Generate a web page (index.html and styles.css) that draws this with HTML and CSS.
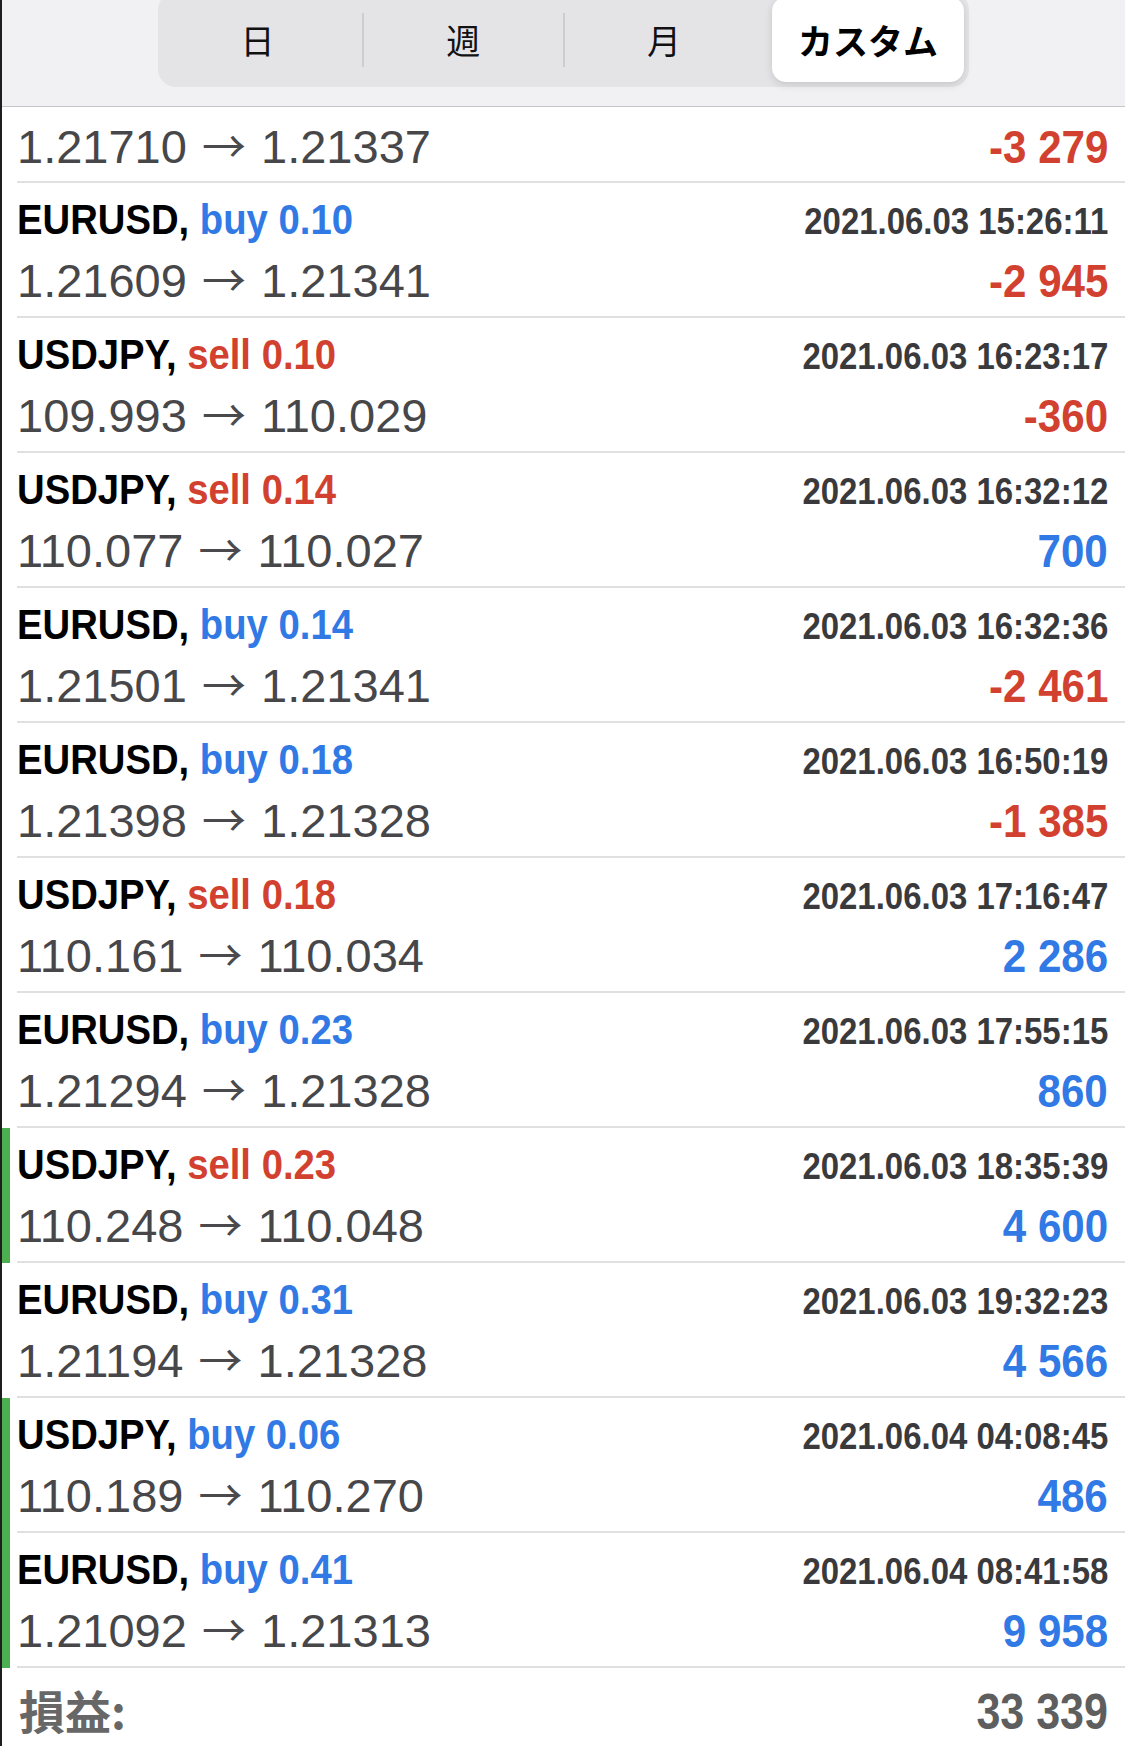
FILE: index.html
```html
<!DOCTYPE html>
<html lang="ja">
<head>
<meta charset="utf-8">
<title>履歴</title>
<link rel="stylesheet" href="styles.css">
</head>
<body>
<div class="screen">
  <header class="header">
    <nav class="segmented">
      <div class="seg divider first">日</div>
      <div class="seg divider">週</div>
      <div class="seg">月</div>
      <div class="seg active">カスタム</div>
    </nav>
  </header>
  <main class="list">
    <div class="row">
      <div class="row-body tail">
        <div class="line line-bottom first">
          <span class="price">1.21710 <span class="arrow">→</span> 1.21337</span>
          <span class="pnl loss">-3 279</span>
        </div>
      </div>
    </div>

    <div class="row">
      <div class="row-body">
        <div class="line line-top">
          <span class="sym">EURUSD, <span class="buy">buy 0.10</span></span>
          <span class="date">2021.06.03 15:26:11</span>
        </div>
        <div class="line line-bottom">
          <span class="price">1.21609 <span class="arrow">→</span> 1.21341</span>
          <span class="pnl loss">-2 945</span>
        </div>
      </div>
    </div>

    <div class="row">
      <div class="row-body">
        <div class="line line-top">
          <span class="sym">USDJPY, <span class="sell">sell 0.10</span></span>
          <span class="date">2021.06.03 16:23:17</span>
        </div>
        <div class="line line-bottom">
          <span class="price">109.993 <span class="arrow">→</span> 110.029</span>
          <span class="pnl loss">-360</span>
        </div>
      </div>
    </div>

    <div class="row">
      <div class="row-body">
        <div class="line line-top">
          <span class="sym">USDJPY, <span class="sell">sell 0.14</span></span>
          <span class="date">2021.06.03 16:32:12</span>
        </div>
        <div class="line line-bottom">
          <span class="price">110.077 <span class="arrow">→</span> 110.027</span>
          <span class="pnl gain">700</span>
        </div>
      </div>
    </div>

    <div class="row">
      <div class="row-body">
        <div class="line line-top">
          <span class="sym">EURUSD, <span class="buy">buy 0.14</span></span>
          <span class="date">2021.06.03 16:32:36</span>
        </div>
        <div class="line line-bottom">
          <span class="price">1.21501 <span class="arrow">→</span> 1.21341</span>
          <span class="pnl loss">-2 461</span>
        </div>
      </div>
    </div>

    <div class="row">
      <div class="row-body">
        <div class="line line-top">
          <span class="sym">EURUSD, <span class="buy">buy 0.18</span></span>
          <span class="date">2021.06.03 16:50:19</span>
        </div>
        <div class="line line-bottom">
          <span class="price">1.21398 <span class="arrow">→</span> 1.21328</span>
          <span class="pnl loss">-1 385</span>
        </div>
      </div>
    </div>

    <div class="row">
      <div class="row-body">
        <div class="line line-top">
          <span class="sym">USDJPY, <span class="sell">sell 0.18</span></span>
          <span class="date">2021.06.03 17:16:47</span>
        </div>
        <div class="line line-bottom">
          <span class="price">110.161 <span class="arrow">→</span> 110.034</span>
          <span class="pnl gain">2 286</span>
        </div>
      </div>
    </div>

    <div class="row">
      <div class="row-body">
        <div class="line line-top">
          <span class="sym">EURUSD, <span class="buy">buy 0.23</span></span>
          <span class="date">2021.06.03 17:55:15</span>
        </div>
        <div class="line line-bottom">
          <span class="price">1.21294 <span class="arrow">→</span> 1.21328</span>
          <span class="pnl gain">860</span>
        </div>
      </div>
    </div>

    <div class="row win">
      <div class="row-body">
        <div class="line line-top">
          <span class="sym">USDJPY, <span class="sell">sell 0.23</span></span>
          <span class="date">2021.06.03 18:35:39</span>
        </div>
        <div class="line line-bottom">
          <span class="price">110.248 <span class="arrow">→</span> 110.048</span>
          <span class="pnl gain">4 600</span>
        </div>
      </div>
    </div>

    <div class="row">
      <div class="row-body">
        <div class="line line-top">
          <span class="sym">EURUSD, <span class="buy">buy 0.31</span></span>
          <span class="date">2021.06.03 19:32:23</span>
        </div>
        <div class="line line-bottom">
          <span class="price">1.21194 <span class="arrow">→</span> 1.21328</span>
          <span class="pnl gain">4 566</span>
        </div>
      </div>
    </div>

    <div class="row win">
      <div class="row-body">
        <div class="line line-top">
          <span class="sym">USDJPY, <span class="buy">buy 0.06</span></span>
          <span class="date">2021.06.04 04:08:45</span>
        </div>
        <div class="line line-bottom">
          <span class="price">110.189 <span class="arrow">→</span> 110.270</span>
          <span class="pnl gain">486</span>
        </div>
      </div>
    </div>

    <div class="row win">
      <div class="row-body">
        <div class="line line-top">
          <span class="sym">EURUSD, <span class="buy">buy 0.41</span></span>
          <span class="date">2021.06.04 08:41:58</span>
        </div>
        <div class="line line-bottom">
          <span class="price">1.21092 <span class="arrow">→</span> 1.21313</span>
          <span class="pnl gain">9 958</span>
        </div>
      </div>
    </div>

    <div class="total">
      <span class="total-label">損益:</span>
      <span class="total-value">33 339</span>
    </div>
  </main>
</div>
</body>
</html>
```

FILE: styles.css
```css
html, body {
  margin: 0;
  padding: 0;
  background: #ffffff;
}

body {
  font-family: "Liberation Sans", Arial, "Noto Sans CJK JP", sans-serif;
}

.screen {
  width: 1125px;
  height: 1746px;
  box-sizing: border-box;
  border-left: 2px solid #1e1e1e;
  overflow: hidden;
  display: flex;
  flex-direction: column;
  background: #ffffff;
}

/* ---------- header / segmented control ---------- */
.header {
  flex: none;
  height: 106px;
  background: #f1f1f3;
  border-bottom: 1px solid #c6c6c8;
  overflow: hidden;
}

.segmented {
  width: 811px;
  height: 95px;
  margin: -8px auto 0;
  box-sizing: border-box;
  padding: 5px 4px;
  background: #e4e4e7;
  border-radius: 18px;
  display: grid;
  grid-template-columns: repeat(4, 1fr);
}

.seg {
  position: relative;
  display: flex;
  align-items: center;
  justify-content: center;
  font-family: "Noto Sans CJK JP", sans-serif;
  font-size: 34px;
  color: #111111;
}

.seg.first {
  padding-right: 10px;
}

.seg.divider::after {
  content: "";
  position: absolute;
  right: -1px;
  top: 16px;
  bottom: 15px;
  width: 2px;
  background: #cdcdd1;
}

.seg.active {
  background: #ffffff;
  border-radius: 14px;
  margin: 0 1px 0 8px;
  box-shadow: 0 3px 8px rgba(0, 0, 0, 0.12), 0 0 1px rgba(0, 0, 0, 0.1);
  font-size: 35px;
  font-weight: 700;
  color: #000000;
}

/* ---------- list ---------- */
.list {
  flex: 1;
  overflow: hidden;
}

.row {
  padding-left: 15px;
}

.row.win {
  box-shadow: inset 8px 0 0 #4caf50;
}

.row-body {
  border-bottom: 2px solid #e0e0e2;
  padding: 13px 17px 10px 0;
}

.row-body.tail {
  padding-top: 9px;
  padding-bottom: 9px;
}

.line {
  display: flex;
  justify-content: space-between;
  align-items: baseline;
  white-space: nowrap;
}

.line-top {
  height: 46px;
}

.line-bottom {
  height: 56px;
  margin-top: 8px;
}

.line-bottom.first {
  margin-top: 0;
}

/* condensed bold texts */
.sym,
.date,
.pnl,
.total-value {
  display: inline-block;
  font-weight: 700;
}

.sym {
  font-size: 43px;
  line-height: 46px;
  color: #000000;
  transform: scaleX(0.89);
  transform-origin: left center;
}

.buy {
  color: #3179e4;
}

.sell {
  color: #d2412f;
}

.date {
  font-size: 36px;
  line-height: 46px;
  color: #3a3a3c;
  transform: scaleX(0.915);
  transform-origin: right center;
}

.price {
  font-size: 47px;
  line-height: 56px;
  color: #47474a;
}

.arrow {
  font-family: "Noto Sans CJK JP", sans-serif;
  font-size: 44px;
  margin: 0 2px;
  color: #4a4a4d;
}

.pnl {
  font-size: 46px;
  line-height: 56px;
  transform: scaleX(0.915);
  transform-origin: right center;
}

.pnl.loss {
  color: #d2412f;
}

.pnl.gain {
  color: #3179e4;
}

/* ---------- total ---------- */
.total {
  display: flex;
  justify-content: space-between;
  align-items: baseline;
  padding: 11px 17px 0 17px;
  white-space: nowrap;
}

.total-label {
  font-family: "Noto Sans CJK JP", sans-serif;
  font-size: 46px;
  line-height: 60px;
  font-weight: 700;
  color: #676767;
}

.total-value {
  font-size: 50px;
  line-height: 60px;
  color: #5e5e5e;
  transform: scaleX(0.86);
  transform-origin: right center;
}
```
